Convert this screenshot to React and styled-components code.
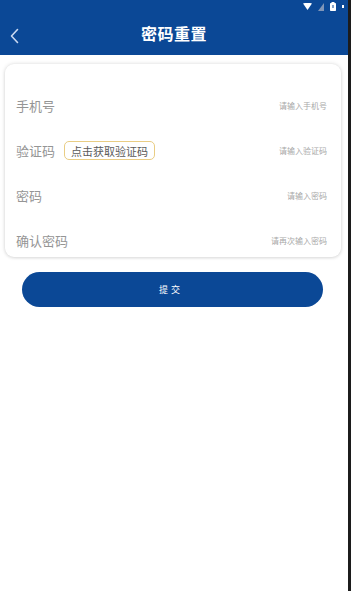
import React from "react";
import styled, { createGlobalStyle } from "styled-components";

const GlobalStyle = createGlobalStyle`
  html, body {
    margin: 0;
    padding: 0;
    background: #ffffff;
    font-family: "Noto Sans CJK SC", "Noto Sans", sans-serif;
  }
  * { box-sizing: border-box; }
`;

const Page = styled.div`
  width: 351px;
  height: 591px;
  background: #ffffff;
  border-right: 3px solid #1c1c1c;
  overflow: hidden;
`;

const Header = styled.div`
  position: relative;
  height: 55px;
  background: #0b4896;
  display: flex;
  align-items: flex-end;
  justify-content: center;
  padding-bottom: 11px;
`;

const StatusIcons = styled.div`
  position: absolute;
  top: 2px;
  right: 4px;
  display: flex;
  align-items: center;
  gap: 6px;
`;

const BackButton = styled.div`
  position: absolute;
  left: 9px;
  top: 25px;
  width: 12px;
  height: 16px;
`;

const Title = styled.h1`
  margin: 0;
  color: #ffffff;
  font-size: 16px;
  font-weight: 700;
  line-height: 22px;
  letter-spacing: 0.5px;
`;

const Body = styled.div`
  padding: 9px 7px 0 5px;
  display: flex;
  flex-direction: column;
  align-items: stretch;
`;

const Card = styled.div`
  height: 193px;
  border-radius: 9px;
  background: #ffffff;
  box-shadow: 0 0 4px rgba(0, 0, 0, 0.14), 0 1px 3px rgba(0, 0, 0, 0.08);
  padding: 19px 14px 0 11px;
  overflow: hidden;
`;

const Row = styled.div`
  height: 45px;
  display: flex;
  align-items: center;
`;

const Label = styled.span`
  font-size: 13px;
  color: #959595;
  white-space: nowrap;
`;

const CodeButton = styled.span`
  margin-left: 9px;
  height: 19px;
  padding: 0 6px;
  display: inline-flex;
  align-items: center;
  border: 1px solid #e9cd84;
  border-radius: 5px;
  font-size: 11px;
  color: #5a5a5a;
  white-space: nowrap;
`;

const Placeholder = styled.span`
  margin-left: auto;
  font-size: 8px;
  color: #a8a8a8;
  white-space: nowrap;
`;

const Submit = styled.button`
  margin: 15px 18px 0 17px;
  height: 35px;
  border: none;
  border-radius: 18px;
  background: #0b4896;
  color: #ffffff;
  font-family: inherit;
  font-size: 9px;
  letter-spacing: 3px;
  padding-left: 3px;
`;

const fields = [
  { label: "手机号", hint: "请输入手机号" },
  { label: "验证码", hint: "请输入验证码", code: true },
  { label: "密码", hint: "请输入密码" },
  { label: "确认密码", hint: "请再次输入密码" },
];

function App() {
  return (
    <Page>
      <GlobalStyle />
      <Header>
        <StatusIcons>
          <svg width="9" height="7" viewBox="0 0 9 7">
            <path d="M0 0.5 Q4.5 -1 9 0.5 L4.5 7 Z" fill="#ffffff" />
          </svg>
          <svg width="6" height="8" viewBox="0 0 6 8">
            <path d="M6 0 L6 8 L0 8 Z" fill="#7f95b8" />
          </svg>
          <svg width="6" height="9" viewBox="0 0 6 9">
            <rect x="1.5" y="0" width="3" height="1" fill="#ffffff" />
            <rect x="0" y="1" width="6" height="8" rx="0.8" fill="#ffffff" />
            <rect x="2.5" y="3" width="1" height="3" fill="#0b4896" />
          </svg>
          <svg width="2" height="3" viewBox="0 0 2 3">
            <rect width="2" height="3" fill="#ffffff" />
          </svg>
        </StatusIcons>
        <BackButton>
          <svg width="12" height="16" viewBox="0 0 12 16">
            <path
              d="M8.5 1.5 L2.5 8 L8.5 14.5"
              fill="none"
              stroke="#c9d8f0"
              strokeWidth="1.6"
              strokeLinecap="round"
              strokeLinejoin="round"
            />
          </svg>
        </BackButton>
        <Title>密码重置</Title>
      </Header>
      <Body>
        <Card>
          {fields.map((f) => (
            <Row key={f.label}>
              <Label>{f.label}</Label>
              {f.code && <CodeButton>点击获取验证码</CodeButton>}
              <Placeholder>{f.hint}</Placeholder>
            </Row>
          ))}
        </Card>
        <Submit>提交</Submit>
      </Body>
    </Page>
  );
}

export default App;
